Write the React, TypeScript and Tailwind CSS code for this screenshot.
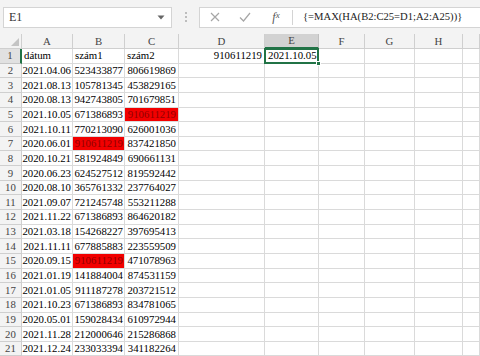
const COLS = [
  { key: "A", w: "w-[51px]" },
  { key: "B", w: "w-[52px]" },
  { key: "C", w: "w-[54px]" },
  { key: "D", w: "w-[86px]" },
  { key: "E", w: "w-[54px]" },
  { key: "F", w: "w-[46px]" },
  { key: "G", w: "w-[50px]" },
  { key: "H", w: "w-[48px]" },
  { key: "I", w: "w-[17px]" },
];

// row data: A, B, C, plus which cell is red
const ROWS: { a: string; b: string; c: string; red?: "B" | "C" }[] = [
  { a: "2021.04.06", b: "523433877", c: "806619869" },
  { a: "2021.08.13", b: "105781345", c: "453829165" },
  { a: "2020.08.13", b: "942743805", c: "701679851" },
  { a: "2021.10.05", b: "671386893", c: "910611219", red: "C" },
  { a: "2021.10.11", b: "770213090", c: "626001036" },
  { a: "2020.06.01", b: "910611219", c: "837421850", red: "B" },
  { a: "2020.10.21", b: "581924849", c: "690661131" },
  { a: "2020.06.23", b: "624527512", c: "819592442" },
  { a: "2020.08.10", b: "365761332", c: "237764027" },
  { a: "2021.09.07", b: "721245748", c: "553211288" },
  { a: "2021.11.22", b: "671386893", c: "864620182" },
  { a: "2021.03.18", b: "154268227", c: "397695413" },
  { a: "2021.11.11", b: "677885883", c: "223559509" },
  { a: "2020.09.15", b: "910611219", c: "471078963", red: "B" },
  { a: "2021.01.19", b: "141884004", c: "874531159" },
  { a: "2021.01.05", b: "911187278", c: "203721512" },
  { a: "2021.10.23", b: "671386893", c: "834781065" },
  { a: "2020.05.01", b: "159028434", c: "610972944" },
  { a: "2021.11.28", b: "212000646", c: "215286868" },
  { a: "2021.12.24", b: "233033394", c: "341182264" },
];

const cell = "h-full shrink-0 border-r border-b border-[#dadada] flex items-center overflow-visible whitespace-nowrap";
const red = "bg-[#f20000] text-[#900000]";

function RowHead({ n, active }: { n: number; active?: boolean }) {
  return (
    <div
      className={`w-[22px] h-full shrink-0 flex items-center justify-center border-b text-[#444] ${
        active ? "bg-[#e1e1e1] border-r-2 border-r-[#217346] border-b-[#c6c6c6]" : "bg-[#f3f3f3] border-r border-[#cfcfcf]"
      }`}
    >
      {n}
    </div>
  );
}

export default function App() {
  return (
    <div
      className="w-[480px] h-[356px] overflow-hidden bg-white text-black text-[10.8px] leading-none"
      style={{ fontFamily: '"Liberation Serif", "Times New Roman", serif' }}
    >
      {/* Formula bar */}
      <div className="h-[34px] bg-[#f3f3f3] flex items-center">
        <div className="ml-[3px] w-[169px] h-[21px] bg-white border border-[#d4d4d4] flex items-center justify-between px-[5px]">
          <span className="text-[12px] text-[#333]">E1</span>
          <svg width="8" height="5" viewBox="0 0 8 5" className="mr-[1px]">
            <path d="M0.5 0.5 L4 4.5 L7.5 0.5 Z" fill="#666" />
          </svg>
        </div>
        <div className="w-[27px] flex flex-col items-center gap-[2px]">
          <span className="w-[2px] h-[2px] bg-[#bdbdbd]" />
          <span className="w-[2px] h-[2px] bg-[#bdbdbd]" />
          <span className="w-[2px] h-[2px] bg-[#bdbdbd]" />
        </div>
        <div className="flex-1 h-[21px] bg-white border border-[#d4d4d4] border-r-0 flex items-center">
          <div className="w-[30px] flex justify-center">
            <svg width="10" height="10" viewBox="0 0 10 10">
              <path d="M1 1 L9 9 M9 1 L1 9" stroke="#a6a6a6" strokeWidth="1.2" />
            </svg>
          </div>
          <div className="w-[30px] flex justify-center">
            <svg width="12" height="10" viewBox="0 0 12 10">
              <path d="M1 5.5 L4.5 9 L11 1" stroke="#a6a6a6" strokeWidth="1.2" fill="none" />
            </svg>
          </div>
          <div className="w-[32px] flex justify-center text-[12px] italic text-[#555]">
            f<span className="text-[9px]">x</span>
          </div>
          <div className="w-px h-[15px] bg-[#d4d4d4]" />
          <span className="ml-[10px] text-[10.6px] text-[#222]">{"{=MAX(HA(B2:C25=D1;A2:A25))}"}</span>
        </div>
      </div>

      {/* Column headers */}
      <div className="flex h-[15px] bg-[#f3f3f3] text-[#444]">
        <div className="w-[22px] h-full shrink-0 border-r border-b border-[#cfcfcf] relative">
          <svg width="8" height="8" viewBox="0 0 8 8" className="absolute right-[2px] bottom-[2px]">
            <path d="M8 0 L8 8 L0 8 Z" fill="#c4c4c4" />
          </svg>
        </div>
        {COLS.map((c) => (
          <div
            key={c.key}
            className={`${c.w} h-full shrink-0 flex items-center justify-center border-r ${
              c.key === "E"
                ? "bg-[#d2d2d2] border-b-2 border-b-[#217346] border-r-[#c0c0c0]"
                : "border-b border-[#cfcfcf]"
            }`}
          >
            {c.key !== "I" && c.key}
          </div>
        ))}
      </div>

      {/* Row 1 */}
      <div className="flex h-[14.65px]">
        <RowHead n={1} active />
        <div className={`${cell} w-[51px] pl-[2px]`}>dátum</div>
        <div className={`${cell} w-[52px] pl-[2px]`}>szám1</div>
        <div className={`${cell} w-[54px] pl-[2px]`}>szám2</div>
        <div className={`${cell} w-[86px] justify-end pr-[2px]`}>910611219</div>
        <div className={`${cell} w-[54px] pl-[3px] relative`}>
          2021.10.05
          <div className="absolute -left-px -top-px -right-px -bottom-px border-2 border-[#217346]" />
          <div className="absolute -right-[3px] -bottom-[3px] w-[5px] h-[5px] bg-[#217346] border border-white" />
        </div>
        <div className={`${cell} w-[46px]`} />
        <div className={`${cell} w-[50px]`} />
        <div className={`${cell} w-[48px]`} />
        <div className={`${cell} w-[17px]`} />
      </div>

      {ROWS.map((r, i) => (
        <div key={i} className="flex h-[14.65px]">
          <RowHead n={i + 2} />
          <div className={`${cell} w-[51px] justify-end pr-[1px]`}>{r.a}</div>
          <div className={`${cell} w-[52px] justify-end pr-[1px] ${r.red === "B" ? red : ""}`}>{r.b}</div>
          <div className={`${cell} w-[54px] justify-end pr-[2px] ${r.red === "C" ? red : ""}`}>{r.c}</div>
          <div className={`${cell} w-[86px]`} />
          <div className={`${cell} w-[54px]`} />
          <div className={`${cell} w-[46px]`} />
          <div className={`${cell} w-[50px]`} />
          <div className={`${cell} w-[48px]`} />
          <div className={`${cell} w-[17px]`} />
        </div>
      ))}
    </div>
  );
}
